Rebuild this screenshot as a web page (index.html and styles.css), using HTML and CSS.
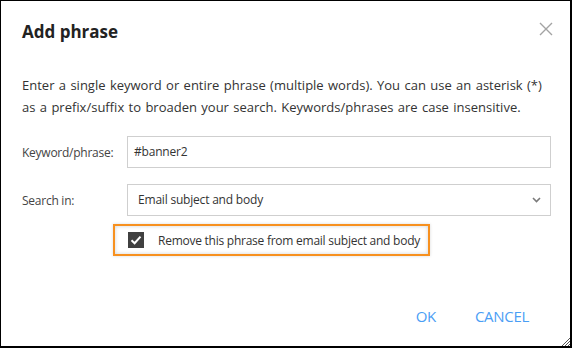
FILE: index.html
```html
<!DOCTYPE html>
<html lang="en">

<head>
	<meta charset="utf-8">
	<title>Add phrase</title>
	<link rel="stylesheet" href="styles.css">
</head>

<body>

	<div class="dialog">

		<div class="dialog-head">
			<h2 class="dialog-title">Add phrase</h2>
			<button class="close-btn" aria-label="Close">
				<svg width="14" height="14" viewBox="0 0 14 14">
					<path d="M1 1 L13 13 M13 1 L1 13" stroke="#a3a3a3" stroke-width="1.4" fill="none" />
				</svg>
			</button>
		</div>

		<p class="intro">Enter a single keyword or entire phrase (multiple words). You can use an asterisk (*) as a prefix/suffix to broaden your search. Keywords/phrases are case insensitive.</p>

		<div class="form-grid">
			<label class="field-label" for="phrase">Keyword/phrase:</label>
			<div class="field-box" id="phrase">#banner2</div>

			<label class="field-label" for="searchIn">Search in:</label>
			<div class="field-box select-box" id="searchIn">
				<span>Email subject and body</span>
				<svg width="9" height="6" viewBox="0 0 9 6">
					<path d="M1 1 L4.5 4.5 L8 1" stroke="#7a7a7a" stroke-width="1.6" fill="none" />
				</svg>
			</div>

			<div class="check-row">
				<span class="check-box">
					<svg width="12" height="10" viewBox="0 0 12 10">
						<path d="M1.5 5.2 L4.6 8.2 L10.5 1.6" stroke="#fff" stroke-width="2" fill="none" />
					</svg>
				</span>
				<span class="check-text">Remove this phrase from email subject and body</span>
			</div>
		</div>

		<div class="dialog-foot">
			<button class="text-btn">OK</button>
			<button class="text-btn">CANCEL</button>
		</div>

		<!-- resize grip in the corner -->
		<svg class="grip" width="9" height="9" viewBox="0 0 9 9">
			<path d="M9 1 L1 9 M9 4 L4 9 M9 7 L7 9" stroke="#555" stroke-width="1" fill="none" />
		</svg>

	</div>

</body>

</html>
```

FILE: styles.css
```css
html,
body {
	margin: 0;
	padding: 0;
	background-color: #fff;
}

body {
	font-family: "Open Sans", "Noto Sans", sans-serif;
	color: #333;
}

.dialog {
	position: relative;
	box-sizing: border-box;
	width: 572px;
	height: 348px;
	border-style: solid;
	border-color: #000;
	border-width: 1px 2px 2px 1px;
	display: flex;
	flex-direction: column;
}

.dialog-head {
	display: flex;
	justify-content: space-between;
	align-items: flex-start;
	padding: 19px 17px 0 21px;
}

.dialog-title {
	margin: 0;
	font-size: 17px;
	line-height: 24px;
	font-weight: 700;
	color: #222;
}

.close-btn {
	border: none;
	background: none;
	padding: 0;
	margin-top: 2px;
	width: 14px;
	height: 14px;
	cursor: pointer;
}

.close-btn svg {
	display: block;
}

.intro {
	margin: 30px 22px 0 21px;
	font-size: 13px;
	line-height: 22px;
	word-spacing: 1px;
	color: #333;
}

.form-grid {
	display: grid;
	grid-template-columns: 105px 1fr;
	row-gap: 16px;
	align-items: center;
	margin: 18px 19px 0 21px;
}

.field-label {
	font-size: 12px;
	letter-spacing: -0.25px;
	color: #444;
}

.field-box {
	box-sizing: border-box;
	height: 32px;
	border: 1px solid #cfcfcf;
	padding: 0 6px;
	font-size: 12px;
	letter-spacing: -0.2px;
	line-height: 30px;
	color: #333;
}

.select-box {
	display: flex;
	justify-content: space-between;
	align-items: center;
	padding: 0 9px 0 10px;
}

.select-box svg {
	display: block;
}

.check-row {
	grid-column: 1 / 3;
	justify-self: start;
	margin: -8px 0 0 91px;
	box-sizing: border-box;
	width: 317px;
	height: 32px;
	border: 2px solid #f7901e;
	box-shadow: inset 0 0 4px rgba(0, 0, 0, 0.18), 0 0 3px rgba(0, 0, 0, 0.15);
	display: flex;
	align-items: center;
	padding-left: 13px;
}

.check-box {
	flex: none;
	width: 16px;
	height: 16px;
	background-color: #404040;
	display: flex;
	align-items: center;
	justify-content: center;
	margin-right: 14px;
}

.check-box svg {
	display: block;
}

.check-text {
	font-size: 12px;
	letter-spacing: -0.25px;
	white-space: nowrap;
	color: #333;
}

.dialog-foot {
	margin-top: auto;
	display: flex;
	justify-content: flex-end;
	gap: 19px;
	padding: 0 31px 20px 0;
}

.text-btn {
	border: none;
	background: none;
	padding: 0 10px;
	font-family: "Open Sans", "Noto Sans", sans-serif;
	font-size: 15px;
	line-height: 20px;
	letter-spacing: -0.3px;
	color: #4a9ef5;
	cursor: pointer;
}

.grip {
	position: absolute;
	right: 0;
	bottom: 0;
}
```
